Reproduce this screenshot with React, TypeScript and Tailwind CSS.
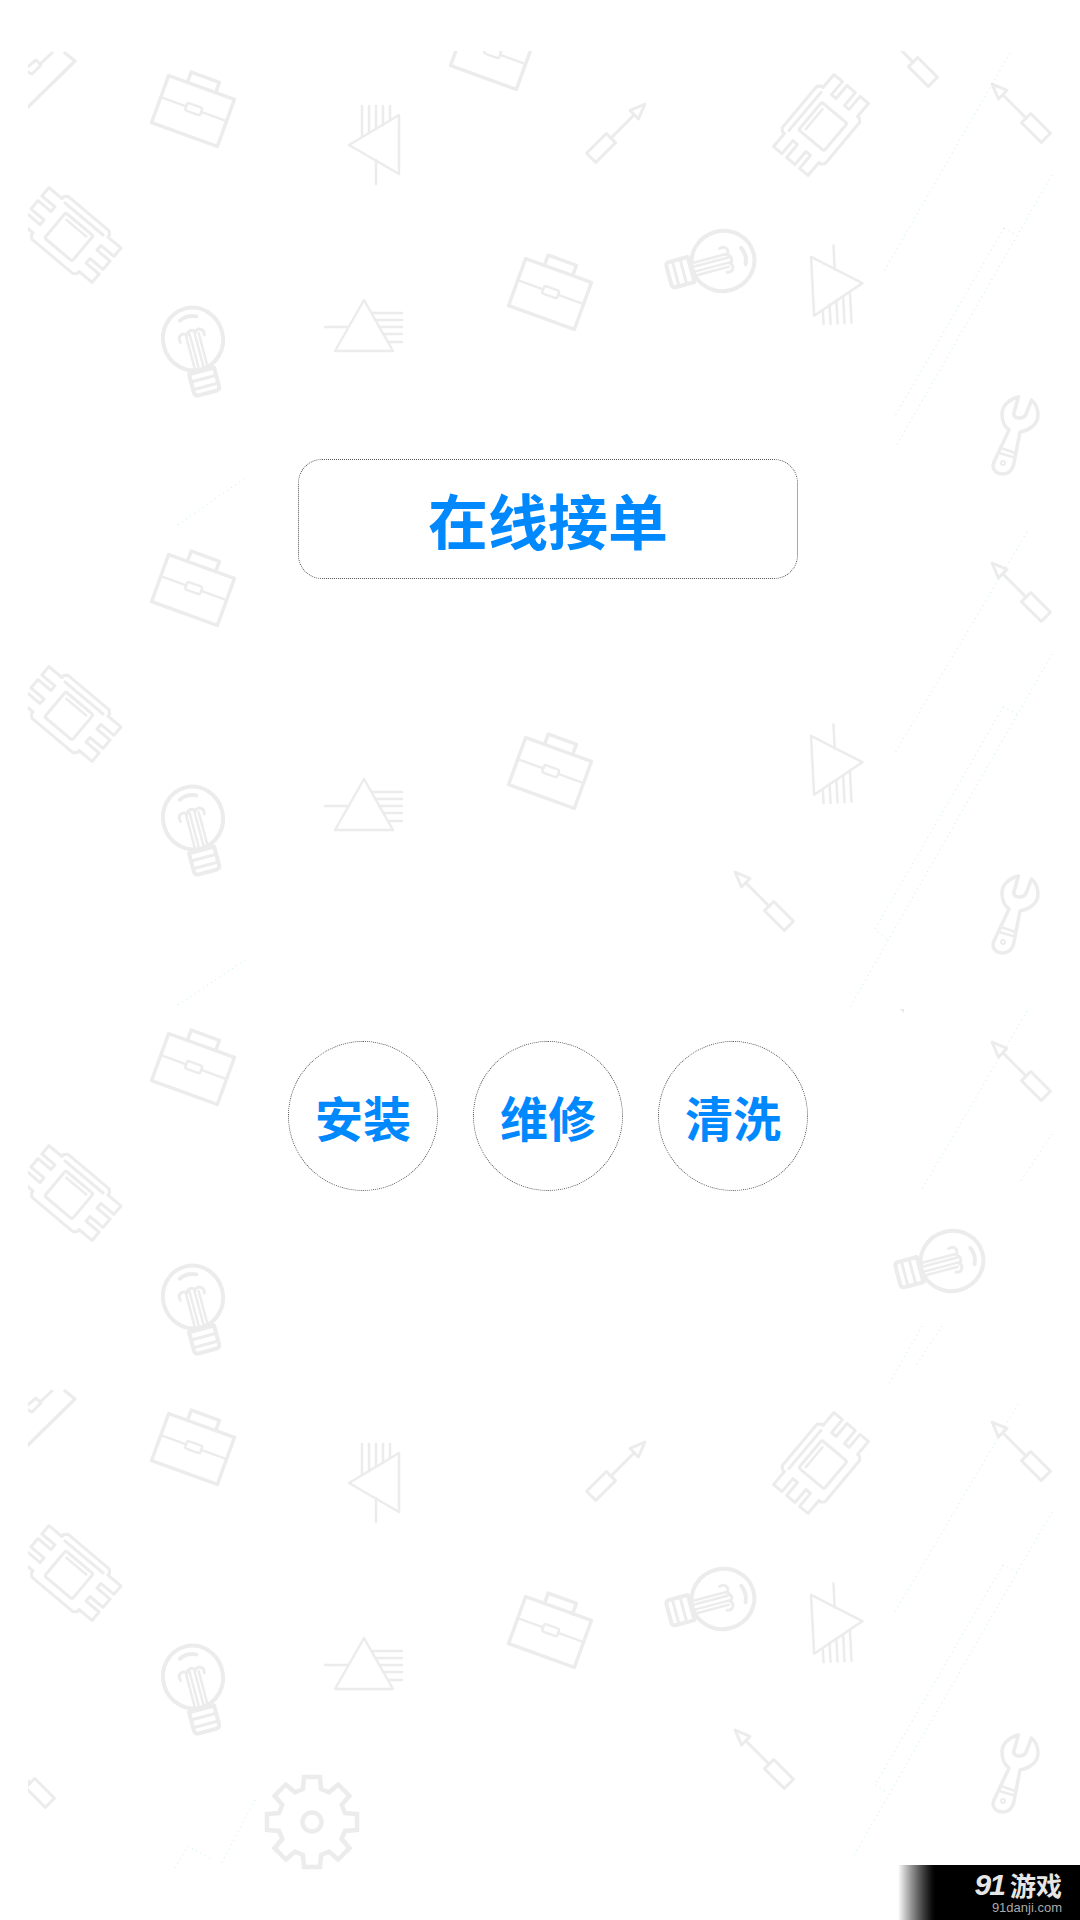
import React from "react";

type Spot = [number, number, number?];

const ICON = "#ececec";
const cjk = "font-['Noto_Sans_CJK_SC',sans-serif]";

function place(spots: Spot[], icon: React.ReactNode) {
  return spots.map(([x, y, r = 0], i) => (
    <g key={i} transform={`translate(${x} ${y}) rotate(${r})`}>
      {icon}
    </g>
  ));
}

const briefcase = (
  <g strokeWidth={3.5} strokeLinejoin="round" strokeLinecap="round">
    <rect x={-35} y={-25} width={70} height={50} />
    <path d="M-15,-25 V-36 H15 V-25" />
    <path strokeWidth={2.5} d="M-35,-2 H-8 M8,-2 H35" />
    <rect strokeWidth={2.5} x={-8} y={-6} width={16} height={8} rx={2} />
  </g>
);

const chip = (
  <g strokeWidth={3} strokeLinejoin="round" strokeLinecap="round">
    <path d="M-27,-28 H27 L30,-25 V-22.5 H47 V-11.5 H30 V-5.5 H47 V5.5 H30 V11.5 H47 V22.5 H30 V25 L27,28 H-27 L-30,25 V22.5 H-47 V11.5 H-30 V5.5 H-47 V-5.5 H-30 V-11.5 H-47 V-22.5 H-30 V-25 Z" />
    <path d="M-25,-21 H25" />
    <rect x={-18} y={-14} width={36} height={33} rx={2} />
    <path strokeWidth={2.5} d="M-13,-9 H13" />
  </g>
);

const bulb = (
  <g strokeWidth={4} strokeLinejoin="round" strokeLinecap="round">
    <ellipse cx={0} cy={0} rx={30} ry={31.5} />
    <path d="M-8,-21 Q0,-25 9,-21" />
    <path strokeWidth={3} d="M-13,0 C-15,-8 -7,-9 -5,-5 C-3,-10 3,-10 4,-6 C6,-10 14,-8 12,-1" />
    <path strokeWidth={2.5} d="M-6,-4 V29 M-2,-6 V29 M3,-6 V29 M7,-4 V29" />
    <path d="M-13,33 H13 V52 Q13,56 9,56 H-9 Q-13,56 -13,52 Z" />
    <path strokeWidth={3} d="M-13,41 H13 M-13,49 H13" />
  </g>
);

const diode = (
  <g strokeWidth={2.5} strokeLinejoin="round" strokeLinecap="round">
    <path d="M-26,0 L24,-30 V29 Z" />
    <path d="M-13,-39 V-8 M-6,-39 V-12 M1,-39 V-16 M8,-39 V-20 M15,-39 V-25 M1,15 V39" />
  </g>
);

const prism = (
  <g strokeWidth={2.5} strokeLinejoin="round" strokeLinecap="round">
    <path d="M0,-27 L29,24 H-29 Z" />
    <path d="M-39,0 H-16 M8,-14 H38 M11,-7 H38 M15,0 H38 M19,7 H38 M24,15 H38" />
  </g>
);

const screwdriver = (
  <g strokeWidth={3} strokeLinejoin="round" strokeLinecap="round">
    <rect x={-38} y={-6.5} width={28} height={13} />
    <path d="M-10,0 H23" />
    <path d="M23,-6 L38,0 L23,6 Z" />
  </g>
);

const wrench = (
  <g strokeWidth={3.5} strokeLinejoin="round" strokeLinecap="round">
    <path d="M2.4,-38 C-7,-36 -14,-29 -14,-21 C-14,-14 -11,-8 -7,-5 L-22,27 C-25,34 -20,39 -13,39 C-7,39 -4,35 -2.4,30 L4,-3 C14,-5 22,-11 22,-20 C22,-26 19,-32 15.5,-35 L10.5,-22 C9,-16 -1,-15 -2.4,-21 Z" />
    <path strokeWidth={2.5} d="M-15,13 L-1,18 M-17,18 L-3,22" />
    <circle strokeWidth={2} cx={-13} cy={28} r={2} />
  </g>
);

const pencil = (
  <g strokeWidth={3.5} strokeLinejoin="round" strokeLinecap="round">
    <path d="M65,53 L75,61 L24,111" />
    <path strokeWidth={3} d="M52,53 L40,64 M40,64 L36,60 L24,70 L32,74 L41,65" />
  </g>
);

function gearPath() {
  const tooth: [number, number][] = [[-9, -33], [-8, -45], [8, -45], [9, -33]];
  const pts: string[] = [];
  for (let i = 0; i < 8; i++) {
    const a = (i * Math.PI) / 4;
    for (const [x, y] of tooth) {
      pts.push(`${(x * Math.cos(a) - y * Math.sin(a)).toFixed(1)},${(x * Math.sin(a) + y * Math.cos(a)).toFixed(1)}`);
    }
  }
  return `M${pts.join(" L")} Z`;
}

// faint teal dots left over in the artwork
const dots = [
  "M1010,53 L883,273", "M1052,175 L895,448", "M1004,228 L895,416 M1004,228 L1017,235",
  "M1027,532 L895,753", "M1052,654 L850,1007", "M1003,707 L875,929 L888,940 M1003,707 L1017,714",
  "M1027,1011 L922,1189", "M1052,1134 L1020,1182", "M922,1326 L887,1387", "M942,1326 L915,1367",
  "M1018,1404 L895,1612", "M1052,1512 L853,1857", "M1003,1565 L875,1785 L888,1793 M1003,1565 L1017,1572",
  "M175,1868 L188,1846 L213,1860 M255,1800 L220,1866", "M178,525 L245,478", "M178,1005 L245,960",
];

function Background() {
  return (
    <svg className="absolute inset-0" width={1080} height={1920} viewBox="0 0 1080 1920" fill="none">
      <defs>
        <clipPath id="tile">
          <rect x={28} y={51} width={1052} height={1869} />
        </clipPath>
        <clipPath id="tile2">
          <rect x={28} y={1389} width={200} height={200} />
        </clipPath>
      </defs>
      <g clipPath="url(#tile)" stroke={ICON}>
        {place([[193, 111, 20], [193, 590, 20], [193, 1069, 20], [193, 1449, 20], [550, 294, 20], [550, 773, 20], [550, 1632, 20], [492, 54, 20]], briefcase)}
        {place([[70.5, 235, 40], [70.5, 714, 40], [70.5, 1193, 40], [70.5, 1573, 40], [821, 125, -50], [821, 1463, -50]], chip)}
        {place([[193, 339, -15], [193, 818, -15], [193, 1297, -15], [193, 1677, -15], [723, 261, 75], [723, 1599, 75], [952, 1261, 75]], bulb)}
        {place([[375, 145], [375, 1483], [836.5, 284.5, 177], [836.5, 763.5, 177], [836.5, 1622.5, 177]], diode)}
        {place([[364, 327], [364, 806], [364, 1665]], prism)}
        {place([[618, 131, -45], [618, 1469, -45], [1019, 111, 225], [1019, 590, 225], [1019, 1069, 225], [1019, 1449, 225], [762, 899, 225], [762, 1757, 225], [906, 55, 225], [23, 1776, 225]], screwdriver)}
        {place([[1016, 435], [1016, 914], [1016, 1773]], wrench)}
        {pencil}
        <g clipPath="url(#tile2)">
          <g transform="translate(0 1338)">{pencil}</g>
        </g>
        <g transform="translate(312 1822)" strokeWidth={4.5}>
          <path d={gearPath()} />
          <circle r={9.5} />
        </g>
      </g>
      <path d={dots.join(" ")} stroke="#c4efe6" strokeWidth={1} strokeDasharray="1 4" />
      <polygon points="900,1009 904,1009 904,1013" fill="#e8e8e8" />
    </svg>
  );
}

function RoundButton({ label }: { label: string }) {
  return (
    <div className="flex h-[150px] w-[150px] items-center justify-center rounded-full border border-dotted border-[#555]">
      <span className="text-[48px] leading-none font-bold text-[#0088ff]">{label}</span>
    </div>
  );
}

export default function App() {
  return (
    <div className={`relative h-[1920px] w-[1080px] overflow-hidden bg-white ${cjk}`}>
      <Background />

      <main className="relative flex flex-col items-center pt-[459px] pl-4">
        <div className="flex h-[120px] w-[500px] items-center justify-center rounded-3xl border border-dotted border-[#555]">
          <span className="text-[60px] leading-none font-bold text-[#0088ff]">在线接单</span>
        </div>

        <div className="mt-[462px] flex gap-[35px]">
          <RoundButton label="安装" />
          <RoundButton label="维修" />
          <RoundButton label="清洗" />
        </div>
      </main>

      {/* watermark */}
      <div className="absolute right-0 bottom-0 flex h-[55px] w-[182px] justify-end bg-gradient-to-r from-white from-0% via-black via-[22%] to-black pr-[18px]">
        <div className="flex flex-col items-end pt-[6px]">
          <div className="flex h-[27px] items-center gap-[6px] text-[#e6e6e6]">
            <span className="font-['Liberation_Sans',sans-serif] text-[30px] leading-none font-bold italic tracking-[-2px]">91</span>
            <span className="text-[26px] leading-none font-bold">游戏</span>
          </div>
          <span className="mt-[2px] font-['Liberation_Sans',sans-serif] text-[13px] leading-[15px] text-[#aaa]">91danji.com</span>
        </div>
      </div>
    </div>
  );
}
